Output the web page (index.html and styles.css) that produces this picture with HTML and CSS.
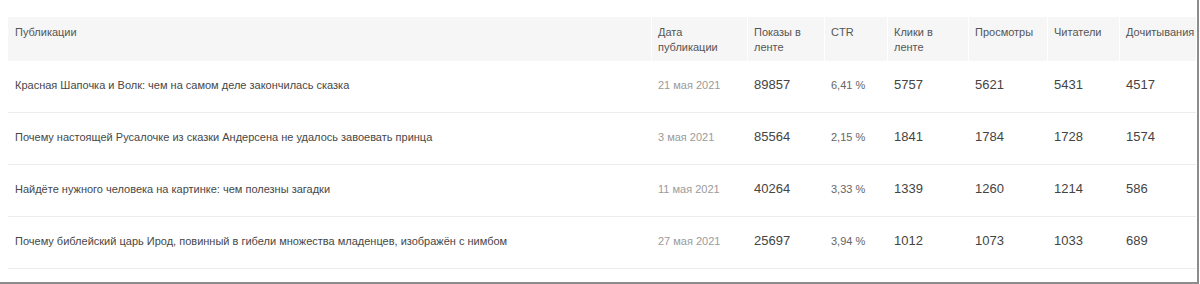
FILE: index.html
```html
<!DOCTYPE html>
<html lang="ru">
<head>
<meta charset="utf-8">
<title>Публикации</title>
<link rel="stylesheet" href="styles.css">
</head>
<body>
<div class="frame">
  <div class="table">
    <div class="row head">
      <div class="cell">Публикации</div>
      <div class="cell">Дата публикации</div>
      <div class="cell">Показы в ленте</div>
      <div class="cell">CTR</div>
      <div class="cell">Клики в ленте</div>
      <div class="cell">Просмотры</div>
      <div class="cell">Читатели</div>
      <div class="cell">Дочитывания</div>
    </div>
    <div class="row">
      <div class="cell title">Красная Шапочка и Волк: чем на самом деле закончилась сказка</div>
      <div class="cell date">21 мая 2021</div>
      <div class="cell num">89857</div>
      <div class="cell ctr">6,41 %</div>
      <div class="cell num">5757</div>
      <div class="cell num">5621</div>
      <div class="cell num">5431</div>
      <div class="cell num">4517</div>
    </div>
    <div class="row">
      <div class="cell title">Почему настоящей Русалочке из сказки Андерсена не удалось завоевать принца</div>
      <div class="cell date">3 мая 2021</div>
      <div class="cell num">85564</div>
      <div class="cell ctr">2,15 %</div>
      <div class="cell num">1841</div>
      <div class="cell num">1784</div>
      <div class="cell num">1728</div>
      <div class="cell num">1574</div>
    </div>
    <div class="row">
      <div class="cell title">Найдёте нужного человека на картинке: чем полезны загадки</div>
      <div class="cell date">11 мая 2021</div>
      <div class="cell num">40264</div>
      <div class="cell ctr">3,33 %</div>
      <div class="cell num">1339</div>
      <div class="cell num">1260</div>
      <div class="cell num">1214</div>
      <div class="cell num">586</div>
    </div>
    <div class="row">
      <div class="cell title">Почему библейский царь Ирод, повинный в гибели множества младенцев, изображён с нимбом</div>
      <div class="cell date">27 мая 2021</div>
      <div class="cell num">25697</div>
      <div class="cell ctr">3,94 %</div>
      <div class="cell num">1012</div>
      <div class="cell num">1073</div>
      <div class="cell num">1033</div>
      <div class="cell num">689</div>
    </div>
  </div>
</div>
</body>
</html>
```

FILE: styles.css
```css
html, body {
  margin: 0;
  padding: 0;
  background: #ffffff;
}

body {
  font-family: "Liberation Sans", Arial, sans-serif;
  color: #444;
}

.frame {
  box-sizing: border-box;
  width: 1199px;
  height: 284px;
  padding: 17px 0 0 8px;
  border-right: 2px solid #8c8c8c;
  border-bottom: 2px solid #8c8c8c;
  overflow: hidden;
}

.table {
  width: 1188px;
}

.row {
  display: grid;
  grid-template-columns: 643px 96px 77px 63px 81px 79px 72px 77px;
  height: 51px;
  border-bottom: 1px solid #ececec;
}

.row .cell {
  display: flex;
  align-items: center;
  padding: 0 10px 3px 7px;
  font-size: 11px;
  line-height: 15px;
  min-width: 0;
}

.row.head {
  height: 44px;
  background: #f6f6f6;
  border-bottom: none;
}

.row.head .cell {
  display: block;
  padding: 8px 10px 0 7px;
  color: #555;
  white-space: normal;
  box-shadow: inset 1px 0 0 #ffffff;
}

.row.head .cell:first-child {
  box-shadow: none;
}

.title {
  color: #474747;
  white-space: nowrap;
}

.date {
  color: #9a9a9a;
  white-space: nowrap;
}

.ctr {
  color: #666;
  white-space: nowrap;
}

.row .num {
  font-size: 13px;
  color: #444;
  padding-bottom: 5px;
}
```
